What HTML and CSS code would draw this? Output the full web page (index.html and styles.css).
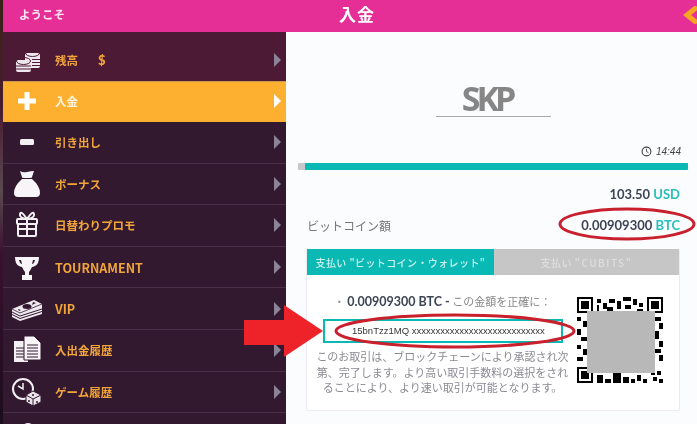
FILE: index.html
```html
<!DOCTYPE html>
<html lang="ja">
<head>
	<meta charset="utf-8">
	<meta name="viewport" content="width=device-width, initial-scale=1">
	<title>入金</title>
	<link rel="stylesheet" href="styles.css">
</head>
<body>
	<header class="topbar">
		<span class="welcome">ようこそ</span>
		<h1 class="title">入金</h1>
		<svg class="back" viewBox="0 0 16 18"><path d="M15 1 L5 9 L15 17" fill="none" stroke="#f5a623" stroke-width="5"/></svg>
	</header>
	<div class="layout">
		<nav class="menu">
			<a class="item first">
				<svg class="icon" viewBox="0 0 32 32">
					<g fill="#eee7ee">
						<rect x="14" y="9" width="15" height="15" rx="2"/>
						<rect x="5" y="16" width="15" height="12" rx="2"/>
					</g>
					<g fill="none" stroke="#4d1a35" stroke-width="1">
						<ellipse cx="21.500" cy="9" rx="7" ry="3.500"/>
						<path d="M21 15.500h8M21 18.500h8M21 21.500h8"/>
						<ellipse cx="12.500" cy="17" rx="7" ry="3.500"/>
						<path d="M5 22h15M5 25h15"/>
					</g>
				</svg>
				<span class="label">残高</span><span class="dollar">$</span>
				<i class="arrow"></i>
			</a>
			<a class="item active">
				<svg class="icon" viewBox="0 0 32 32"><path d="M16 7v18M7 16h18" stroke="#fff" stroke-width="5" fill="none"/></svg>
				<span class="label">入金</span>
				<i class="arrow"></i>
			</a>
			<a class="item dark">
				<svg class="icon" viewBox="0 0 32 32"><rect x="9" y="13" width="14" height="6" rx="1.500" fill="#f3f0f3"/></svg>
				<span class="label">引き出し</span>
				<i class="arrow"></i>
			</a>
			<a class="item dark">
				<svg class="icon" viewBox="0 0 32 32"><path d="M9 3q3 2 7 1t7-1l-2 6q1 1-5 1t-5-1zM11 11h10q8 7 8 14 0 4-4 4H7q-4 0-4-4 0-7 8-14z" fill="#f7f5f7"/></svg>
				<span class="label">ボーナス</span>
				<i class="arrow"></i>
			</a>
			<a class="item dark">
				<svg class="icon" viewBox="0 0 32 32"><g fill="none" stroke="#f3f0f3" stroke-width="2"><rect x="6" y="10" width="20" height="5" rx="1"/><rect x="7" y="15" width="18" height="12" rx="1"/><path d="M16 10v17M7 20h18M16 10q-8-1-7-5t7 5q8-1 7-5t-7 5"/></g></svg>
				<span class="label">日替わりプロモ</span>
				<i class="arrow"></i>
			</a>
			<a class="item dark">
				<svg class="icon" viewBox="0 0 32 32"><path d="M4 6h24q0 7-4 9-2 1-3 1-2 4-3 5v3h3v5h-10v-5h3v-3q-1-1-3-5-1 0-3-1-4-2-4-9z" fill="#f7f5f7"/><path d="M8 9q1 4 3 4l-1-4zM24 9q-1 4-3 4l1-4z" fill="#33192f"/></svg>
				<span class="label latin">TOURNAMENT</span>
				<i class="arrow"></i>
			</a>
			<a class="item dark">
				<svg class="icon" viewBox="0 0 32 32">
					<path d="M1 16 23 7 31 11V21L9 28 1 24z" fill="#eee9ee"/>
					<path d="M1 19l8 4 22-7M1 21.500l8 4 22-7" stroke="#33192f" stroke-width="1" fill="none"/>
					<path d="M1 16l8 4 22-9" stroke="#33192f" stroke-width=".8" fill="none"/>
					<ellipse cx="16" cy="13.500" rx="4.500" ry="2.500" fill="#33192f"/>
					<path d="M22 9l3 1-4 2zM7 16l3 1-2 1z" fill="#33192f"/>
				</svg>
				<span class="label latin">VIP</span>
				<i class="arrow"></i>
			</a>
			<a class="item dark">
				<svg class="icon" viewBox="0 0 32 32">
					<rect x="3" y="7" width="14" height="21" fill="#f3f0f3"/>
					<path d="M5 14h8M5 17h8M5 20h8M5 23h8" stroke="#33192f" stroke-width="1"/>
					<path d="M13 2h10l7 7v17H13z" fill="#f7f5f7" stroke="#33192f" stroke-width="1"/>
					<path d="M16 11h11M16 14h11M16 17h11M16 20h11M16 23h11" stroke="#33192f" stroke-width="1"/>
				</svg>
				<span class="label">入出金履歴</span>
				<i class="arrow"></i>
			</a>
			<a class="item dark">
				<svg class="icon" viewBox="0 0 32 32">
					<circle cx="12" cy="13" r="10" fill="none" stroke="#f3f0f3" stroke-width="2"/>
					<path d="M12 7v6l-5-3" fill="none" stroke="#f3f0f3" stroke-width="1.500"/>
					<path d="M22 15l8 4v7l-8 4-7-4v-7z" fill="#e9e4e9" stroke="#33192f" stroke-width="1"/>
					<path d="M15 19l7 4 8-4M22 23v7" fill="none" stroke="#33192f" stroke-width="1"/>
					<circle cx="22" cy="19" r="1" fill="#33192f"/><circle cx="18" cy="25" r="1" fill="#33192f"/><circle cx="26" cy="26" r="1" fill="#33192f"/>
				</svg>
				<span class="label">ゲーム履歴</span>
				<i class="arrow"></i>
			</a>
			<div class="rest">
				<svg class="peek" viewBox="0 0 12 4"><path d="M0 4q6-6 12 0z" fill="#f3f0f3"/></svg>
			</div>
		</nav>
		<main class="main">
			<div class="logo">
				<span class="logo-text">SKP</span>
			</div>
			<div class="timer">
				<svg class="clock" viewBox="0 0 10 10"><circle cx="5" cy="5" r="4" fill="none" stroke="#444" stroke-width="1"/><path d="M5 2.500V5l1.800 1" fill="none" stroke="#444" stroke-width=".8"/></svg>
				<em>14:44</em>
			</div>
			<div class="progress"><div class="progress-fill"></div></div>
			<div class="usd">103.50 <b>USD</b></div>
			<div class="btc-row">
				<span class="btc-label">ビットコイン額</span>
				<span class="btc-value">0.00909300 <b>BTC</b></span>
			</div>
			<section class="panel">
				<div class="tabs">
					<div class="tab on">支払い "ビットコイン・ウォレット"</div>
					<div class="tab">支払い <span class="tab-latin">"CUBITS"</span></div>
				</div>
				<div class="panel-body">
					<div class="pay">
						<p class="amount">・ <strong>0.00909300 BTC -</strong> この金額を正確に：</p>
						<div class="address">15bnTzz1MQ xxxxxxxxxxxxxxxxxxxxxxxxxxxx</div>
						<p class="note">このお取引は、ブロックチェーンにより承認され次第、完了します。より高い取引手数料の選択をされることにより、より速い取引が可能となります。</p>
					</div>
					<svg class="qr" viewBox="0 0 43 43" shape-rendering="crispEdges">
						<path fill="#000" d="M0 0h8v8H0zM35 0h8v8h-8zM0 35h8v8H0z"/>
						<path fill="#fff" d="M1 1h6v6H1zM36 1h6v6h-6zM1 36h6v6H1z"/>
						<path fill="#000" d="M2 2h4v4H2zM37 2h4v4h-4zM2 37h4v4H2z"/>
						<path fill="#000" d="M10 1h2v2h-2zM10 4h1v3h-1zM13 3h2v3h-2zM16 1h3v2h-3zM15 5h3v2h-3zM20 2h2v4h-2zM23 0h4v2h-4zM24 4h3v2h-3zM28 1h2v3h-2zM31 3h2v2h-2zM30 6h3v1h-3z"/>
						<path fill="#000" d="M0 10h2v2H0zM3 12h2v3H3zM0 16h2v3H0zM2 20h3v2H2zM0 24h2v2H0zM3 26h2v3H3zM0 30h3v2H0z"/>
						<path fill="#000" d="M39 10h3v2h-3zM41 13h2v3h-2zM39 17h2v4h-2zM41 22h2v3h-2zM39 26h3v2h-3zM41 29h2v3h-2z"/>
						<path fill="#000" d="M10 39h3v4h-3zM14 41h3v2h-3zM18 38h4v5h-4zM23 40h3v3h-3zM27 41h2v2h-2zM30 39h2v3h-2zM33 41h2v2h-2zM37 37h2v2h-2zM40 37h2v2h-2zM38 40h2v2h-2zM41 41h2v2h-2z"/>
						<rect class="qr-mask" x="5" y="7" width="34" height="31"/>
					</svg>
				</div>
			</section>
		</main>
	</div>
	<svg class="marks" viewBox="0 0 697 424">
		<ellipse cx="627" cy="224" rx="67" ry="15" fill="none" stroke="#c8202c" stroke-width="3"/>
		<ellipse cx="455" cy="331" rx="119" ry="16" fill="none" stroke="#c8202c" stroke-width="3"/>
		<path d="M244 320H284V305L323 331 284 357V345H244z" fill="#ee2229"/>
	</svg>
</body>
</html>
```

FILE: styles.css
```css
* {
	box-sizing: border-box;
}
html, body {
	height: 100%;
}
body {
	margin: 0;
	padding-left: 3px;
	overflow: hidden;
	background: linear-gradient(#3a2416 0, #4a1a30 25%, #5a4a50 45%, #3a1030 60%, #1c0c1c 100%);
	font-family: "Noto Sans CJK JP", "Noto Sans", sans-serif;
	color: #555;
}
/* the reference is a soft, upscaled capture */
.topbar, .layout {
	filter: blur(0.35px);
}
.topbar {
	height: 32px;
	padding-bottom: 5px;
	background: #e62e97;
	box-shadow: 0 1px 2px rgba(0,0,0,0.25);
	display: flex;
	align-items: center;
	position: relative;
}
.welcome {
	margin-left: 16px;
	width: 320px;
	font-size: 11.500px;
	font-weight: 700;
	color: #fbe6f3;
}
.title {
	margin: 0;
	font-size: 17px;
	font-weight: 700;
	color: #fff;
	letter-spacing: 1px;
}
.back {
	margin-left: auto;
	margin-top: 3px;
	margin-right: -1px;
	width: 16px;
	height: 18px;
}
.layout {
	display: flex;
	height: 392px;
}
.menu {
	width: 283px;
	flex: none;
	background: #33192f;
	display: flex;
	flex-direction: column;
	overflow: hidden;
}
.item {
	height: 41.600px;
	flex: none;
	display: flex;
	align-items: center;
	padding-left: 8px;
	border-bottom: 1px solid #48304a;
}
.item.first {
	height: 49px;
	padding-top: 7px;
	background: #4d1a35;
	border-bottom: none;
}
.item.active {
	height: 41px;
	padding-bottom: 2px;
	background: #fdb02f;
	border-bottom: none;
	border-top: 1px solid #c99a50;
}
.rest {
	flex: 1;
	padding: 6px 0 0 19px;
	line-height: 0;
}
.peek {
	width: 12px;
	height: 4px;
}
.icon {
	width: 32px;
	height: 32px;
	flex: none;
	margin-right: 12px;
}
.label {
	font-size: 11.500px;
	font-weight: 700;
	color: #f2a63a;
}
.label.latin {
	font-size: 12.500px;
}
.active .label {
	color: #fff3dc;
}
.dollar {
	margin-left: 20px;
	font-family: "Lato", sans-serif;
	font-size: 13px;
	font-weight: 900;
	color: #f2a63a;
}
.arrow {
	margin-left: auto;
	margin-right: 5px;
	width: 0;
	height: 0;
	border-left: 7px solid #8b8398;
	border-top: 7px solid transparent;
	border-bottom: 7px solid transparent;
}
.active .arrow {
	border-left-color: #fff;
}
.main {
	flex: 1;
	background: #fbfcfe;
	padding: 0 9px 0 12px;
	display: flex;
	flex-direction: column;
}
.logo {
	margin: 46px auto 0;
	width: 115px;
	height: 39px;
	border-bottom: 1px solid #aaa;
	text-align: center;
	padding: 2px 12px 0 0;
}
.logo-text {
	font-family: "Open Sans", sans-serif;
	font-size: 34px;
	font-weight: 700;
	line-height: 36px;
	letter-spacing: -4px;
	color: #868686;
}
.timer {
	margin-top: 24px;
	padding-right: 7px;
	display: flex;
	justify-content: flex-end;
	align-items: center;
	gap: 4px;
	height: 20px;
	font-family: "Liberation Sans", sans-serif;
	font-size: 10px;
	color: #444;
}
.clock {
	width: 11px;
	height: 11px;
}
.progress {
	margin-top: 2px;
	height: 7px;
	background: #c8c8c8;
	border-radius: 1px;
}
.progress-fill {
	margin-left: 7px;
	height: 100%;
	background: #0ab9b3;
	border-radius: 1px;
}
.usd, .btc-value {
	font-family: "Lato", sans-serif;
	font-size: 13px;
	font-weight: 700;
	color: #3d4454;
}
.usd b, .btc-value b {
	color: #26c0b8;
	font-weight: 700;
}
.usd {
	margin-top: 15px;
	padding-right: 8px;
	text-align: right;
	line-height: 18px;
}
.btc-row {
	margin: 13px 0 0 9px;
	padding-right: 8px;
	display: flex;
	justify-content: space-between;
	align-items: center;
	height: 18px;
}
.btc-label {
	font-size: 12px;
	color: #777;
}
.panel {
	margin: 15px 8px 0 8px;
	background: #fff;
	border: 1px solid #ececf0;
	border-top: none;
	border-radius: 2px;
	height: 162px;
}
.tabs {
	display: flex;
	height: 26px;
}
.tab {
	flex: 1;
	display: flex;
	align-items: center;
	justify-content: center;
	gap: 3px;
	background: #c6c6c6;
	font-size: 10px;
	font-weight: 500;
	color: #dedede;
	letter-spacing: 0.400px;
}
.tab-latin {
	letter-spacing: 1.500px;
}
.tab.on {
	flex: none;
	width: 187px;
	background: #0ab9b3;
	color: #c9f2ef;
}
.panel-body {
	display: flex;
	padding: 18px 0 0 8px;
	gap: 7px;
}
.pay {
	width: 255px;
	flex: none;
}
.amount {
	margin: 0;
	text-align: center;
	font-size: 11px;
	line-height: 16px;
	color: #888;
}
.amount strong {
	font-family: "Lato", sans-serif;
	font-size: 12.500px;
	color: #3d4454;
}
.address {
	margin: 9px 0 6px 8px;
	width: 240px;
	height: 24px;
	border: 2px solid #0ab9b3;
	font-family: "Liberation Sans", sans-serif;
	font-size: 9.500px;
	line-height: 20px;
	padding-left: 27px;
	color: #333;
	white-space: nowrap;
	overflow: hidden;
}
.note {
	margin: 0;
	text-align: center;
	font-size: 11px;
	line-height: 15.500px;
	color: #8a8a92;
}
.qr {
	width: 86px;
	height: 86px;
	flex: none;
	margin-top: 4px;
}
.qr-mask {
	fill: #b8b8b8;
}
.marks {
	position: absolute;
	left: 0;
	top: 0;
	width: 697px;
	height: 424px;
	pointer-events: none;
}
```
